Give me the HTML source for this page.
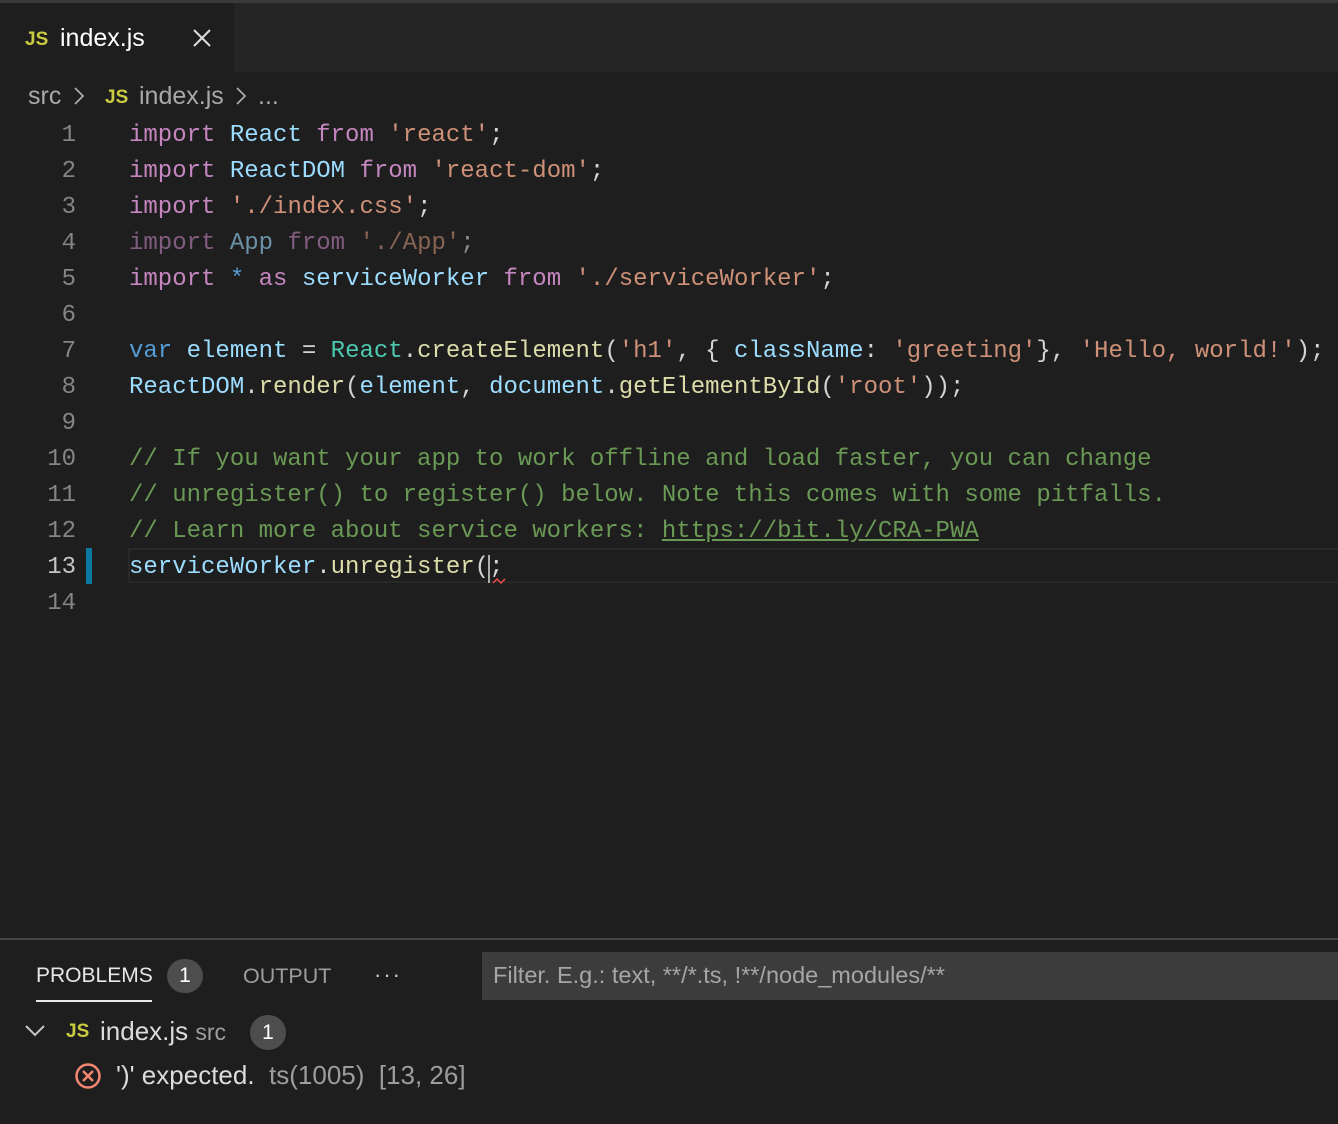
<!DOCTYPE html>
<html><head><meta charset="utf-8"><style>
*{margin:0;padding:0;box-sizing:border-box}
body{width:1338px;height:1124px;background:#1e1e1e;overflow:hidden;position:relative;font-family:"Liberation Sans",sans-serif}
.abs{position:absolute;white-space:pre}
.code{font-family:"Liberation Mono",monospace;font-size:24px;line-height:36px;color:#d4d4d4}
.ln{font-family:"Liberation Mono",monospace;font-size:24px;line-height:36px;color:#858585;width:76px;text-align:right;left:0}
.k{color:#c586c0}.v{color:#9cdcfe}.s{color:#ce9178}.b{color:#569cd6}.t{color:#4ec9b0}.f{color:#dcdcaa}.c{color:#6a9955}
.js{color:#cbcb41;font-weight:bold;font-size:19px}
</style></head><body>
<div class="abs" style="left:0;top:0;width:1338px;height:3px;background:#3a3a3a"></div>
<div class="abs" style="left:234px;top:3px;width:1104px;height:69px;background:#252526"></div>
<div class="abs" style="left:0;top:3px;width:234px;height:69px;background:#1e1e1e"></div>
<div class="abs js" style="left:25px;top:29px">JS</div>
<div class="abs" style="left:60px;top:24px;font-size:25px;color:#fff">index.js</div>
<svg class="abs" style="left:192px;top:28px" width="20" height="20"><path d="M2 2L18 18M18 2L2 18" stroke="#ddd" stroke-width="2"/></svg>
<div class="abs" style="left:28px;top:82px;font-size:25px;color:#a9a9a9">src</div>
<svg class="abs" style="left:73px;top:86px" width="12" height="20"><path d="M2 2L10 10L2 18" stroke="#a9a9a9" stroke-width="1.8" fill="none"/></svg>
<div class="abs js" style="left:105px;top:87px">JS</div>
<div class="abs" style="left:139px;top:82px;font-size:25px;color:#a9a9a9">index.js</div>
<svg class="abs" style="left:235px;top:86px" width="12" height="20"><path d="M2 2L10 10L2 18" stroke="#a9a9a9" stroke-width="1.8" fill="none"/></svg>
<div class="abs" style="left:258px;top:82px;font-size:25px;color:#a9a9a9">...</div>

<div class="abs" style="left:128px;top:548px;width:1210px;height:35px;border:2px solid #282828;border-right:none"></div>
<div class="abs" style="left:86px;top:548px;width:6px;height:36px;background:#0a7aa0"></div>

<div class="abs ln" style="top:118px">1</div>
<div class="abs ln" style="top:154px">2</div>
<div class="abs ln" style="top:190px">3</div>
<div class="abs ln" style="top:226px">4</div>
<div class="abs ln" style="top:262px">5</div>
<div class="abs ln" style="top:298px">6</div>
<div class="abs ln" style="top:334px">7</div>
<div class="abs ln" style="top:370px">8</div>
<div class="abs ln" style="top:406px">9</div>
<div class="abs ln" style="top:442px">10</div>
<div class="abs ln" style="top:478px">11</div>
<div class="abs ln" style="top:514px">12</div>
<div class="abs ln" style="top:550px;color:#c6c6c6">13</div>
<div class="abs ln" style="top:586px">14</div>

<div class="abs code" style="left:129px;top:118px"><span class="k">import</span> <span class="v">React</span> <span class="k">from</span> <span class="s">'react'</span>;</div>
<div class="abs code" style="left:129px;top:154px"><span class="k">import</span> <span class="v">ReactDOM</span> <span class="k">from</span> <span class="s">'react-dom'</span>;</div>
<div class="abs code" style="left:129px;top:190px"><span class="k">import</span> <span class="s">'./index.css'</span>;</div>
<div class="abs code" style="left:129px;top:226px;opacity:.6"><span class="k">import</span> <span class="v">App</span> <span class="k">from</span> <span class="s">'./App'</span>;</div>
<div class="abs code" style="left:129px;top:262px"><span class="k">import</span> <span class="b">*</span> <span class="k">as</span> <span class="v">serviceWorker</span> <span class="k">from</span> <span class="s">'./serviceWorker'</span>;</div>
<div class="abs code" style="left:129px;top:334px"><span class="b">var</span> <span class="v">element</span> = <span class="t">React</span>.<span class="f">createElement</span>(<span class="s">'h1'</span>, { <span class="v">className</span>: <span class="s">'greeting'</span>}, <span class="s">'Hello, world!'</span>);</div>
<div class="abs code" style="left:129px;top:370px"><span class="v">ReactDOM</span>.<span class="f">render</span>(<span class="v">element</span>, <span class="v">document</span>.<span class="f">getElementById</span>(<span class="s">'root'</span>));</div>
<div class="abs code c" style="left:129px;top:442px">// If you want your app to work offline and load faster, you can change</div>
<div class="abs code c" style="left:129px;top:478px">// unregister() to register() below. Note this comes with some pitfalls.</div>
<div class="abs code c" style="left:129px;top:514px">// Learn more about service workers: <span style="text-decoration:underline">https://bit.ly/CRA-PWA</span></div>
<div class="abs code" style="left:129px;top:550px"><span class="v">serviceWorker</span>.<span class="f">unregister</span>(;</div>
<div class="abs" style="left:488px;top:555px;width:2px;height:28px;background:#aeafad"></div>
<svg class="abs" style="left:492px;top:577px" width="14" height="8"><path d="M1 6L5 2L9 6L13 2" stroke="#f14c4c" stroke-width="1.5" fill="none"/></svg>

<div class="abs" style="left:0;top:938px;width:1338px;height:2px;background:#444"></div>
<div class="abs" style="left:36px;top:964px;font-size:21px;color:#e7e7e7">PROBLEMS</div>
<div class="abs" style="left:36px;top:1000px;width:116px;height:2px;background:#e7e7e7"></div>
<div class="abs" style="left:167px;top:959px;width:36px;height:34px;border-radius:17px;background:#4d4d4d;color:#fff;font-size:21px;text-align:center;line-height:34px">1</div>
<div class="abs" style="left:243px;top:964px;font-size:21.5px;color:#9d9d9d">OUTPUT</div>
<div class="abs" style="left:374px;top:962px;font-size:22px;color:#ccc;letter-spacing:2px">···</div>
<div class="abs" style="left:482px;top:952px;width:856px;height:48px;background:#3c3c3c"></div>
<div class="abs" style="left:493px;top:962px;font-size:23.5px;color:#a6a6a6">Filter. E.g.: text, **/*.ts, !**/node_modules/**</div>
<svg class="abs" style="left:24px;top:1024px" width="22" height="14"><path d="M2 2L11 11L20 2" stroke="#c5c5c5" stroke-width="2" fill="none"/></svg>
<div class="abs js" style="left:66px;top:1021px">JS</div>
<div class="abs" style="left:100px;top:1016px;font-size:26px;color:#dcdcdc">index.js <span style="font-size:23px;color:#9d9d9d">src</span></div>
<div class="abs" style="left:250px;top:1015px;width:36px;height:35px;border-radius:18px;background:#4d4d4d;color:#fff;font-size:21px;text-align:center;line-height:35px">1</div>
<svg class="abs" style="left:74px;top:1062px" width="28" height="28"><circle cx="14" cy="14" r="11.5" stroke="#f48771" stroke-width="2.5" fill="none"/><path d="M9 9L19 19M19 9L9 19" stroke="#f48771" stroke-width="2.5"/></svg>
<div class="abs" style="left:116px;top:1060px;font-size:26px;color:#dcdcdc">')' expected.  <span style="color:#9d9d9d">ts(1005)  [13, 26]</span></div>
</body></html>
